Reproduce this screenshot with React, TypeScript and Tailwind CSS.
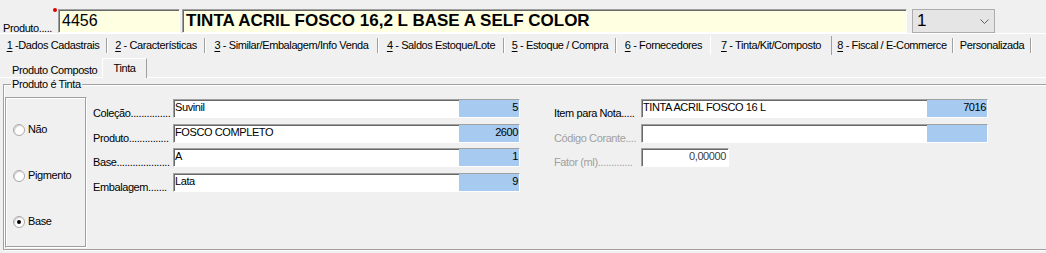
import React from "react";

const sunken =
  "border border-t-[#a0a0a0] border-l-[#a0a0a0] border-b-white border-r-white shadow-[inset_1px_1px_0_#696969]";

type TabType = { key: string; rest: string; width: number; active?: boolean; sep?: boolean };

const tabs: TabType[] = [
  { key: "1", rest: " -Dados Cadastrais", width: 108, sep: true },
  { key: "2", rest: " - Características", width: 98, sep: true },
  { key: "3", rest: " - Similar/Embalagem/Info Venda", width: 173, sep: true },
  { key: "4", rest: " - Saldos Estoque/Lote", width: 126, sep: true },
  { key: "5", rest: " - Estoque / Compra", width: 112, sep: true },
  { key: "6", rest: " - Fornecedores", width: 93 },
  { key: "7", rest: " - Tinta/Kit/Composto", width: 122, active: true },
  { key: "8", rest: " - Fiscal / E-Commerce", width: 122, sep: true },
  { key: "", rest: "Personalizada", width: 78, sep: true },
];

const Separator = () => (
  <div className="flex h-[15px] shrink-0">
    <span className="w-px bg-[#a0a0a0]" />
    <span className="w-px bg-white" />
  </div>
);

type FieldRowType = {
  label: string;
  value: string;
  code?: string;
  labelWidth: number;
  disabled?: boolean;
};

const FieldRow = ({ label, value, code, labelWidth, disabled }: FieldRowType) => {
  return (
    <div className="flex items-end h-[19px]">
      <div
        className={`whitespace-nowrap leading-[13px] mb-[-2px] ${
          disabled ? "text-[#a0a0a0]" : "text-black"
        }`}
        style={{ width: labelWidth }}
      >
        {label}
      </div>
      <div className={`flex w-[347px] h-[19px] bg-white ${sunken}`}>
        <div className="flex-1 pl-[1px] pt-[1px] leading-[13px] whitespace-nowrap">
          {value}
        </div>
        <div className="w-[60px] bg-[#a6caf0] text-right pr-[1px] pt-[1px] leading-[13px]">
          {code}
        </div>
      </div>
    </div>
  );
};

const Radio = ({ label, checked }: { label: string; checked?: boolean }) => (
  <div className="flex items-center h-[13px] pl-[7px]">
    <div className="w-[12px] h-[12px] rounded-full border border-[#a9a9a9] bg-white shadow-[inset_1px_1px_1px_#d0d0d0] flex items-center justify-center">
      {checked && <div className="w-[4px] h-[4px] rounded-full bg-black" />}
    </div>
    <span className="ml-[3px] leading-[13px]">{label}</span>
  </div>
);

const App = () => {
  return (
    <div className="w-[1046px] h-[253px] overflow-hidden bg-[#f0f0f0] font-['Liberation_Sans',Arial,sans-serif] text-[11px] tracking-[-0.4px] text-black">
      {/* cabeçalho produto */}
      <div className="flex items-end pt-[4px] h-[33px]">
        <div className="w-[58px] pl-[3px] leading-[13px] mb-[-2px] self-end">
          Produto.....
        </div>
        <div className="relative">
          <span className="absolute left-[-5px] top-[-1px] w-[4px] h-[4px] rounded-full bg-[#e00000]" />
          <div
            className={`w-[122px] h-[24px] bg-[#ffffe1] pl-[3px] text-[16px] tracking-normal leading-[22px] ${sunken}`}
          >
            4456
          </div>
        </div>
        <div
          className={`ml-[2px] w-[725px] h-[24px] bg-[#ffffe1] pl-[3px] text-[17px] font-bold tracking-normal leading-[22px] whitespace-nowrap ${sunken}`}
        >
          TINTA ACRIL FOSCO 16,2 L BASE A SELF COLOR
        </div>
        <div className="ml-[5px] w-[83px] h-[24px] bg-[#e5e5e5] border border-[#acacac] flex items-center justify-between pl-[4px] pr-[5px]">
          <span className="text-[17px] tracking-normal leading-[22px]">1</span>
          <svg width="9" height="5" viewBox="0 0 9 5">
            <path d="M0.5 0.5 L4.5 4.5 L8.5 0.5" fill="none" stroke="#606060" strokeWidth="1" />
          </svg>
        </div>
      </div>

      {/* abas principais */}
      <div className="flex items-center h-[23px] border-t border-white">
        {tabs.map((t) => (
          <div
            key={t.rest}
            className={`flex items-center h-[19px] shrink-0 ${
              t.active ? "border-l border-white border-r border-r-[#a0a0a0]" : ""
            }`}
            style={{ width: t.width }}
          >
            <div className="flex-1 text-center whitespace-nowrap leading-[13px]">
              {t.key && <span className="underline underline-offset-2">{t.key}</span>}
              {t.rest}
            </div>
            {t.sep && <Separator />}
          </div>
        ))}
      </div>

      {/* abas secundárias */}
      <div className="flex items-end h-[22px]">
        <div className="w-[3px] h-px bg-white" />
        <div className="w-[99px] h-[15px] border-b border-white pt-[1px] pl-[9px] leading-[13px] whitespace-nowrap">
          Produto Composto
        </div>
        <div className="w-[45px] h-[20px] border-t border-l border-white border-r border-r-[#a0a0a0] pt-[3px] text-center leading-[13px]">
          Tinta
        </div>
        <div className="flex-1 h-px bg-white" />
      </div>

      {/* grupo produto é tinta */}
      <fieldset className="ml-[3px] w-[1060px] border border-[#a0a0a0] shadow-[inset_1px_1px_0_white,1px_1px_0_white] pl-px pb-px">
        <legend className="ml-[6px] px-px leading-[13px]">Produto é Tinta</legend>
        <div className="flex pt-[6px]">
          <div className="w-[82px] h-[151px] border border-t-[#a0a0a0] border-l-[#a0a0a0] border-b-white border-r-white shadow-[inset_-1px_-1px_0_#a0a0a0,inset_1px_1px_0_white] flex flex-col pt-[25px] gap-[33px]">
            <Radio label="Não" />
            <Radio label="Pigmento" />
            <Radio label="Base" checked />
          </div>

          <div className="ml-[6px] mt-[2px] flex flex-col gap-[5.5px]">
            <FieldRow labelWidth={80} label="Coleção..............." value="Suvinil" code="5" />
            <FieldRow labelWidth={80} label="Produto..............." value="FOSCO COMPLETO" code="2600" />
            <FieldRow labelWidth={80} label="Base...................." value="A" code="1" />
            <FieldRow labelWidth={80} label="Embalagem......." value="Lata" code="9" />
          </div>

          <div className="ml-[34px] mt-[2px] flex flex-col gap-[5.5px]">
            <FieldRow labelWidth={87} label="Item para Nota....." value="TINTA ACRIL FOSCO 16 L" code="7016" />
            <FieldRow labelWidth={87} label="Código Corante...." value="" code="" disabled />
            <div className="flex items-end h-[19px]">
              <div className="w-[87px] whitespace-nowrap leading-[13px] mb-[-2px] text-[#a0a0a0]">
                Fator (ml).............
              </div>
              <div className={`w-[88px] h-[19px] bg-white text-right pr-[2px] pt-[1px] leading-[13px] text-[#404040] ${sunken}`}>
                0,00000
              </div>
            </div>
          </div>
        </div>
      </fieldset>
    </div>
  );
};

export default App;
